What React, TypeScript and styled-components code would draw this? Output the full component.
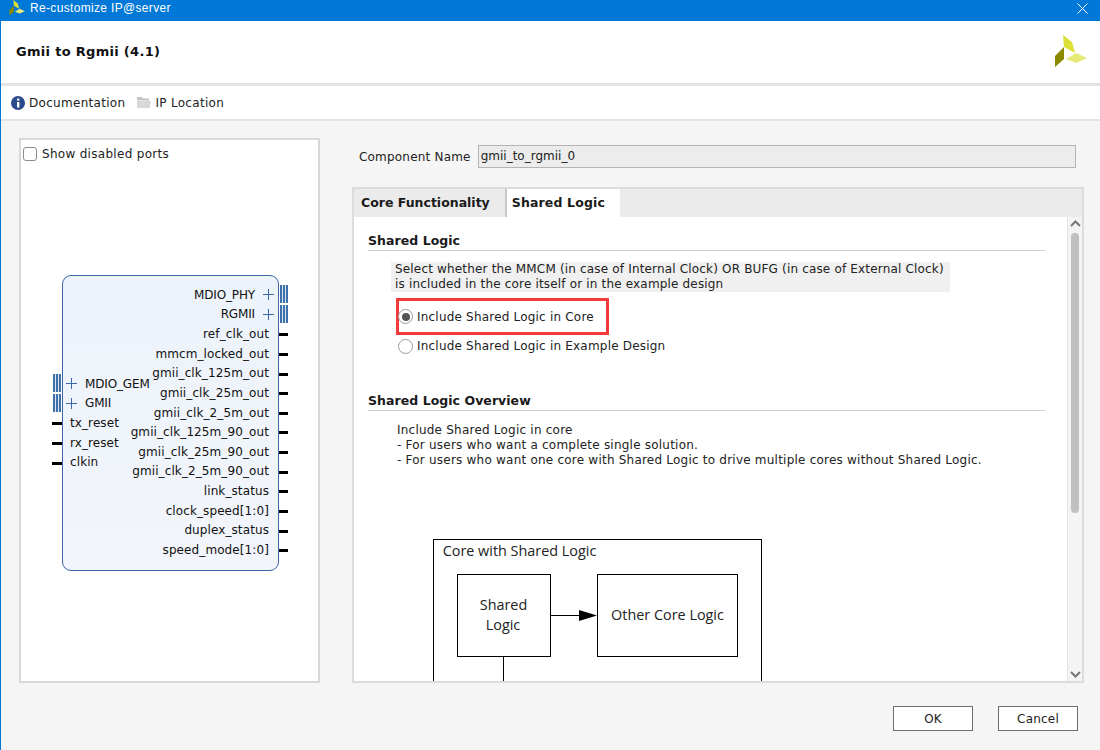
import React from "react";
import styled, { createGlobalStyle } from "styled-components";

const Global = createGlobalStyle`
  html, body { margin: 0; padding: 0; width: 1100px; height: 750px; overflow: hidden; background: #f5f5f5; }
  body { font-family: "DejaVu Sans", sans-serif; font-size: 12px; color: #1a1a1a; letter-spacing: 0.2px; }
  * { box-sizing: border-box; }
`;

const Dialog = styled.div`
  width: 1100px; height: 750px; display: flex; flex-direction: column;
  border-left: 1px solid #0078d7; background: #f5f5f5; overflow: hidden;
`;
const TitleBar = styled.div`
  height: 21px; margin-left: -1px; background: #0078d7; color: #fff; display: flex; align-items: center;
  padding: 0 12px 5px 9px; gap: 5px; font-family: "Liberation Sans", sans-serif; font-size: 12px; flex: none;
  letter-spacing: 0.33px; overflow: hidden;
`;
const TitleText = styled.span`flex: 1;`;
const Header = styled.div`
  height: 65px; flex: none; background: #fff; border-bottom: 3px solid #e4e4e4; display: flex;
  align-items: center; justify-content: space-between; padding: 0 13px 1px 15px;
`;
const HeaderTitle = styled.div`font-weight: bold; font-size: 13px; color: #111; letter-spacing: 0.3px;`;
const Toolbar = styled.div`
  height: 35px; flex: none; background: #fff; border-bottom: 2px solid #e4e4e4; display: flex; align-items: center;
  padding: 0 0 0 10px; gap: 12px;
`;
const ToolItem = styled.div`
  display: flex; align-items: center; gap: 4px; color: #222; font-size: 12px; letter-spacing: 0.3px;
`;
const Body = styled.div`
  flex: 1; display: flex; padding: 17px 16px 0 18px; gap: 32px; min-height: 0; align-items: flex-start;
`;
const LeftPanel = styled.div`
  width: 301px; height: 545px; flex: none; background: #fff; border: 2px solid #d8d8d8; position: relative;
  padding: 6px 2px;
`;
const CheckRow = styled.label`display: flex; align-items: center; gap: 5px; font-size: 12px; color: #222; height: 16px; letter-spacing: 0.3px;`;
const CheckBox = styled.span`
  width: 14px; height: 14px; border: 1px solid #8c8c8c; border-radius: 3px; background: #fff; flex: none;
`;
const Block = styled.div`
  position: absolute; left: 41px; top: 135px; width: 217px; height: 296px; border: 1px solid #3c66a8;
  border-radius: 9px; background: linear-gradient(#edf3fb, #f2f5fb); display: flex; justify-content: space-between;
  font-size: 12px; color: #111; letter-spacing: 0.1px;
`;
const LeftPorts = styled.div`display: flex; flex-direction: column; padding-top: 98px; align-items: flex-start; width: 60px; flex: none;`;
const RightPorts = styled.div`display: flex; flex-direction: column; padding-top: 9px; align-items: flex-end; flex: none;`;
const Port = styled.div<{ $side: "l" | "r"; $bus?: boolean }>`
  height: 19.64px; display: flex; align-items: center; position: relative; white-space: nowrap;
  justify-content: ${p => (p.$side === "r" ? "flex-end" : "flex-start")};
  padding: ${p => (p.$side === "r" ? "0 9px 0 0" : "0 0 0 7px")};
  letter-spacing: ${p => (p.$bus ? "-0.15px" : "0.1px")};
`;
const Plus = styled.span<{ $side: "l" | "r" }>`
  width: 11px; height: 11px; flex: none; position: relative; display: block;
  margin: ${p => (p.$side === "r" ? "0 -5px 0 8px" : "0 8px 0 -4px")};
  &::before { content: ""; position: absolute; left: 0; right: 0; top: 5px; height: 1px; background: #3c66a8; }
  &::after { content: ""; position: absolute; top: 0; bottom: 0; left: 5px; width: 1px; background: #3c66a8; }
`;
const Stub = styled.span<{ $side: "l" | "r" }>`
  position: absolute; height: 3px; background: #000; top: 9px;
  ${p => (p.$side === "r" ? "right: -10px; width: 9px;" : "left: -11px; width: 10px;")}
`;
const Bus = styled.span<{ $side: "l" | "r" }>`
  position: absolute; width: 8px; height: 18px; top: 0; background:
    repeating-linear-gradient(90deg, #3e70aa 0 2px, #dce7f4 2px 3px);
  ${p => (p.$side === "r" ? "right: -10px;" : "left: -10px;")}
`;
const RightPane = styled.div`flex: 1; min-width: 0; display: flex; flex-direction: column;`;
const NameRow = styled.div`
  height: 23px; margin: 7px 8px 19px 7px; display: flex; align-items: center; gap: 7px; color: #222;
`;
const NameInput = styled.div`
  flex: 1; height: 23px; border: 1px solid #b4b4b4; background: #ececec; display: flex; align-items: center;
  padding: 0 0 1px 2px; color: #222; letter-spacing: 0;
`;
const TabPane = styled.div`
  height: 496px; border: 2px solid #dcdcdc; background: #fff; display: flex; flex-direction: column;
`;
const TabBar = styled.div`height: 28px; background: #ebebeb; display: flex; flex: none;`;
const Tab = styled.div<{ $active?: boolean }>`
  height: 28px; display: flex; align-items: center; font-weight: bold; font-size: 12.5px; color: #1a1a1a;
  padding-bottom: 2px;
  letter-spacing: ${p => (p.$active ? "0.15px" : "0")};
  padding-left: ${p => (p.$active ? "5px" : "7px")};
  padding-right: 15px;
  background: ${p => (p.$active ? "#fff" : "transparent")};
  border-left: ${p => (p.$active ? "2px solid #c8c8c8" : "none")};
`;
const ScrollArea = styled.div`flex: 1; display: flex; min-height: 0;`;
const Content = styled.div`flex: 1; min-width: 0; overflow: hidden; padding: 15px 0 0 14px; position: relative;`;
const Section = styled.div`
  width: 677px; font-weight: bold; font-size: 12.5px; height: 19px; border-bottom: 1px solid #cfcfcf; color: #1a1a1a;
  line-height: 17px; letter-spacing: 0.05px;
`;
const Description = styled.div`
  margin: 11px 0 0 23px; width: 559px; background: #f0f0f0; padding: 0 4px; line-height: 15px; color: #222; height: 30px;
  white-space: nowrap; letter-spacing: 0.17px;
`;
const RedBox = styled.div`
  margin: 6px 0 0 28px; width: 213px; height: 37px; border: 3px solid #f23a3a; display: flex; align-items: center;
  padding-left: 0;
`;
const RadioRow = styled.div<{ $plain?: boolean }>`
  display: flex; align-items: center; gap: 4px; color: #222; height: 16px;
  margin-left: ${p => (p.$plain ? "30px" : "-1px")};
  margin-top: ${p => (p.$plain ? "3px" : "0")};
`;
const Radio = styled.span<{ $on?: boolean }>`
  width: 15px; height: 15px; border-radius: 50%; border: 1px solid #9a9a9a; background: #fff; flex: none; display: flex;
  align-items: center; justify-content: center;
  &::after { content: ""; width: 8px; height: 8px; border-radius: 50%; background: ${p => (p.$on ? "#555" : "transparent")}; }
`;
const Overview = styled.div`margin: 38px 0 0 0;`;
const OverviewText = styled.div`margin: 12px 0 0 29px; line-height: 15px; color: #222; letter-spacing: 0.22px; white-space: nowrap;`;
const Diagram = styled.svg`position: absolute; left: 0; top: 0; display: block; letter-spacing: 0;`;
const ScrollTrack = styled.div`
  width: 15px; flex: none; background: #f4f4f4; border-left: 1px solid #e4e4e4; display: flex; flex-direction: column;
  align-items: center; position: relative; padding: 16px 1px 0 0;
`;
const Thumb = styled.div`width: 8px; height: 280px; border-radius: 4px; background: #c0c0c0;`;
const Arrow = styled.svg<{ $down?: boolean }>`
  position: absolute; left: 2px; ${p => (p.$down ? "bottom: 3px;" : "top: 3px;")}
`;
const Footer = styled.div`
  height: 67px; flex: none; display: flex; justify-content: flex-end; align-items: flex-start; gap: 25px; padding: 23px 22px 0 0;
`;
const Button = styled.div`
  width: 80px; height: 25px; border: 1px solid #6e6e6e; background: #fff; display: flex; align-items: center;
  justify-content: center; color: #222;
`;

const Logo = ({ size }: { size: number }) => (
  <svg width={size} height={size} viewBox="0 0 33 33" style={{ flex: "none" }}>
    <polygon points="9,0 18,7 21,18 10,12" fill="#dbdf38" />
    <polygon points="10,12 1,21 1,32 10,24" fill="#8a8a00" />
    <polygon points="12,24 22,18 33,23 22,28" fill="#e6ea78" />
  </svg>
);

const rightPorts: { n: string; bus?: boolean }[] = [
  { n: "MDIO_PHY", bus: true }, { n: "RGMII", bus: true }, { n: "ref_clk_out" }, { n: "mmcm_locked_out" },
  { n: "gmii_clk_125m_out" }, { n: "gmii_clk_25m_out" }, { n: "gmii_clk_2_5m_out" }, { n: "gmii_clk_125m_90_out" },
  { n: "gmii_clk_25m_90_out" }, { n: "gmii_clk_2_5m_90_out" }, { n: "link_status" }, { n: "clock_speed[1:0]" },
  { n: "duplex_status" }, { n: "speed_mode[1:0]" },
];
const leftPorts: { n: string; bus?: boolean }[] = [
  { n: "MDIO_GEM", bus: true }, { n: "GMII", bus: true }, { n: "tx_reset" }, { n: "rx_reset" }, { n: "clkin" },
];

export default function App() {
  return (
    <Dialog>
      <Global />
      <TitleBar>
        <Logo size={16} />
        <TitleText>Re-customize IP@server</TitleText>
        <svg width="11" height="11" viewBox="0 0 11 11"><path d="M.5.5l10 10M10.500.5l-10 10" stroke="#fff" fill="none" /></svg>
      </TitleBar>
      <Header>
        <HeaderTitle>Gmii to Rgmii (4.1)</HeaderTitle>
        <Logo size={33} />
      </Header>
      <Toolbar>
        <ToolItem>
          <svg width="14" height="14" viewBox="0 0 14 14">
            <circle cx="7" cy="7" r="7" fill="#2c4b8c" />
            <rect x="6" y="6" width="2.4" height="5.5" fill="#fff" />
            <rect x="6" y="2.6" width="2.4" height="2" fill="#fff" />
          </svg>
          Documentation
        </ToolItem>
        <ToolItem>
          <svg width="14" height="13" viewBox="0 0 14 13">
            <path d="M0 1h5l1 1.500h6v2H0z" fill="#c4c4c4" />
            <path d="M0 5h14l-1.500 7H0z" fill="#d8d8d8" />
          </svg>
          IP Location
        </ToolItem>
      </Toolbar>
      <Body>
        <LeftPanel>
          <CheckRow><CheckBox />Show disabled ports</CheckRow>
          <Block>
            <LeftPorts>
              {leftPorts.map(p => (
                <Port key={p.n} $side="l" $bus={p.bus}>
                  {p.bus ? <><Bus $side="l" /><Plus $side="l" /></> : <Stub $side="l" />}
                  {p.n}
                </Port>
              ))}
            </LeftPorts>
            <RightPorts>
              {rightPorts.map(p => (
                <Port key={p.n} $side="r" $bus={p.bus}>
                  {p.n}
                  {p.bus ? <><Plus $side="r" /><Bus $side="r" /></> : <Stub $side="r" />}
                </Port>
              ))}
            </RightPorts>
          </Block>
        </LeftPanel>
        <RightPane>
          <NameRow>Component Name<NameInput>gmii_to_rgmii_0</NameInput></NameRow>
          <TabPane>
            <TabBar>
              <Tab>Core Functionality</Tab>
              <Tab $active>Shared Logic</Tab>
            </TabBar>
            <ScrollArea>
              <Content>
                <Section>Shared Logic</Section>
                <Description>
                  Select whether the MMCM (in case of Internal Clock) OR BUFG (in case of External Clock)<br />
                  is included in the core itself or in the example design
                </Description>
                <RedBox>
                  <RadioRow><Radio $on />Include Shared Logic in Core</RadioRow>
                </RedBox>
                <RadioRow $plain><Radio />Include Shared Logic in Example Design</RadioRow>
                <Overview><Section>Shared Logic Overview</Section></Overview>
                <OverviewText>
                  Include Shared Logic in core<br />
                  - For users who want a complete single solution.<br />
                  - For users who want one core with Shared Logic to drive multiple cores without Shared Logic.
                </OverviewText>
                <Diagram width="714" height="464" viewBox="354 217 714 464">
                  <g fill="none" stroke="#000" strokeWidth="1" shapeRendering="crispEdges">
                    <path d="M433.500 690V539.500H761.500V690" />
                    <rect x="457.500" y="574.500" width="93" height="82" />
                    <rect x="597.500" y="574.500" width="140" height="82" />
                    <path d="M551 615.500H580M503.500 657V690" />
                  </g>
                  <polygon points="579,610 597,615.500 579,621" fill="#000" />
                  <g fontFamily="'Open Sans', sans-serif" fontSize="14.4" fill="#222" textAnchor="middle">
                    <text x="519.500" y="556">Core with Shared Logic</text>
                    <text x="503.500" y="610">Shared</text>
                    <text x="503" y="630">Logic</text>
                    <text x="667.500" y="620">Other Core Logic</text>
                  </g>
                </Diagram>
              </Content>
              <ScrollTrack>
                <Arrow width="11" height="7" viewBox="0 0 11 7"><path d="M1 6l4.500-4.500L10 6" stroke="#777" strokeWidth="2" fill="none" /></Arrow>
                <Thumb />
                <Arrow $down width="11" height="7" viewBox="0 0 11 7"><path d="M1 1l4.500 4.500L10 1" stroke="#777" strokeWidth="2" fill="none" /></Arrow>
              </ScrollTrack>
            </ScrollArea>
          </TabPane>
        </RightPane>
      </Body>
      <Footer>
        <Button>OK</Button>
        <Button>Cancel</Button>
      </Footer>
    </Dialog>
  );
}
